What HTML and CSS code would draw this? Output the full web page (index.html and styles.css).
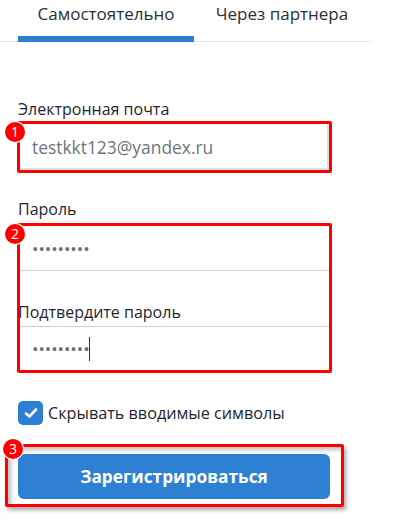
FILE: index.html
```html
<!DOCTYPE html>
<html lang="ru">
<head>
<meta charset="utf-8">
<link rel="stylesheet" href="styles.css">
</head>
<body>
<div class="tabs">
  <div class="tab active">Самостоятельно</div>
  <div class="tab">Через партнера</div>
</div>
<form class="form">
  <div class="label first">Электронная почта</div>
  <div class="mark mark-email">
    <span class="badge">1</span>
    <div class="input email">testkkt123@yandex.ru</div>
  </div>
  <div class="label second">Пароль</div>
  <div class="mark mark-pass">
    <span class="badge">2</span>
    <div class="input pass"><span class="dots">•••••••••</span></div>
    <div class="label inner">Подтвердите пароль</div>
    <div class="input pass confirm"><span class="dots">•••••••••</span><span class="cursor"></span></div>
  </div>
  <label class="check">
    <span class="box"><svg width="14" height="12" viewBox="0 0 14 12"><path d="M2 6.5 L5.5 9.5 L12 2.5" fill="none" stroke="#fff" stroke-width="2.6" stroke-linecap="round" stroke-linejoin="round"/></svg></span>
    <span class="check-text">Скрывать вводимые символы</span>
  </label>
  <div class="mark mark-btn">
    <span class="badge">3</span>
    <div class="btn">Зарегистрироваться</div>
  </div>
</form>
</body>
</html>
```
FILE: styles.css
```css
* { box-sizing: border-box; }
html, body { margin: 0; padding: 0; background: #fff; }
body {
  font-family: "Open Sans", "Noto Sans", sans-serif;
  color: #222;
  width: 400px;
  height: 523px;
  overflow: hidden;
}
.tabs {
  display: flex;
  width: 370px;
  height: 42px;
  border-bottom: 1px solid #e6e9eb;
}
.tab {
  font-size: 17px;
  line-height: 20px;
  color: #2a2f36;
  padding-top: 4px;
  text-align: center;
}
.tab.active {
  margin-left: 18px;
  width: 176px;
  border-bottom: 6px solid #2b7fd4;
  margin-bottom: -1px;
}
.tab:not(.active) {
  width: 170px;
  padding-left: 6px;
}
.form {
  padding-left: 18px;
  width: 350px;
  margin: 0;
}
.label {
  font-size: 16px;
  line-height: 20px;
  color: #1f2530;
}
.label.first { margin-top: 57px; margin-bottom: 2px; }
.label.second { margin-top: 26px; margin-bottom: 4px; }
.label.inner { margin: 31px 0 4px -2px; }
.mark {
  position: relative;
  border: 3px solid #ff0000;
  border-radius: 2px;
  margin-left: -1px;
  width: 315px;
}
.badge {
  position: absolute;
  width: 20px;
  height: 20px;
  border-radius: 50%;
  background: #ff0000;
  color: #fff;
  font-size: 14px;
  line-height: 20px;
  text-align: center;
  box-shadow: 0 0 0 1px #fff;
  left: -15px;
  top: -2px;
  z-index: 2;
}
.input {
  height: 46px;
  padding-left: 12px;
  display: flex;
  align-items: center;
  color: #6b7580;
}
.email {
  font-size: 17.4px;
  box-shadow: inset -2px -2px 0 #dcdfe2;
}
.pass {
  height: 45px;
  border-bottom: 1px solid #d0d0d0;
}
.pass.confirm {
  border-bottom: 0;
  border-top: 1px solid #d0d0d0;
  height: 44px;
}
.dots {
  font-size: 17px;
  letter-spacing: 0px;
  color: #666d75;
}
.cursor {
  display: inline-block;
  width: 1px;
  height: 24px;
  background: #333;
  margin-left: -1px;
}
.check {
  display: flex;
  align-items: center;
  margin-top: 28px;
  height: 24px;
}
.box {
  width: 25px;
  height: 24px;
  border-radius: 5px;
  background: #2b7fd4;
  display: flex;
  align-items: center;
  justify-content: center;
}
.check-text {
  font-size: 16.2px;
  margin-left: 5px;
  color: #1f2530;
}
.mark-btn {
  margin-top: 19px;
  margin-left: -13px;
  width: 339px;
  padding: 7px 11px 5px 10px;
  box-shadow: 2px 3px 4px rgba(0,0,0,0.35), inset 3px 3px 4px rgba(0,0,0,0.25);
}
.mark-btn .badge { left: -5px; top: -8px; }
.btn {
  height: 45px;
  border-radius: 6px;
  background: #2e80d3;
  color: #fff;
  font-weight: 700;
  font-size: 17.3px;
  display: flex;
  align-items: center;
  justify-content: center;
}
```
